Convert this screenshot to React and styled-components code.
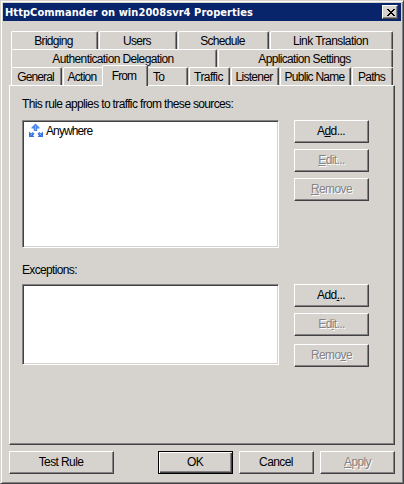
import React from "react";
import styled, { createGlobalStyle } from "styled-components";

const FACE = "#d6d3ce";
const SHADOW = "#848284";
const DARK = "#424142";

const GlobalStyle = createGlobalStyle`
  * { box-sizing: border-box; }
  body { margin: 0; background: ${FACE}; }
`;

const Dialog = styled.div`
  width: 404px;
  height: 484px;
  padding: 1px;
  display: flex;
  flex-direction: column;
  background: ${FACE};
  border: 1px solid;
  border-color: ${FACE} ${DARK} ${DARK} ${FACE};
  box-shadow: inset 1px 1px #fff, inset -1px -1px ${SHADOW};
  font: 12px/14px "Liberation Sans", Arial, sans-serif;
  letter-spacing: -0.6px;
  color: #000;
  white-space: nowrap;
  overflow: hidden;
`;

const TitleBar = styled.header`
  flex: none;
  height: 18px;
  margin: 1px 0 0 1px;
  width: 398px;
  padding: 0 3px 0 2px;
  display: flex;
  align-items: center;
  justify-content: space-between;
  background: #08246b;
`;

const Title = styled.h1`
  margin: 0;
  padding-top: 1px;
  font: bold 11px/16px "DejaVu Sans Condensed", "DejaVu Sans", sans-serif;
  font-stretch: condensed;
  letter-spacing: 0.06px;
  color: #fff;
`;

const CloseButton = styled.button`
  width: 16px;
  height: 14px;
  padding: 0 0 0 1px;
  display: flex;
  align-items: center;
  justify-content: center;
  background: ${FACE};
  border: 1px solid;
  border-color: #fff ${DARK} ${DARK} #fff;
  box-shadow: inset -1px -1px ${SHADOW};
`;

const Tabs = styled.nav`
  flex: none;
  width: 382px;
  margin: 10px 0 0 9px;
`;

const TabRow = styled.div`
  height: 18px;
  display: flex;
`;

const Tab = styled.div`
  flex: none;
  width: ${(p) => p.$width - p.$gap}px;
  height: 18px;
  margin-left: ${(p) => p.$gap}px;
  padding: 2px 2px 0 0;
  text-align: center;
  background: ${FACE};
  border-top: 1px solid #fff;
  border-left: 1px solid #fff;
  border-right: 1px solid ${DARK};
  border-radius: 2px 2px 0 0;
  box-shadow: inset -1px 0 ${SHADOW};
`;

const TabBeforeActive = styled(Tab)`
  border-right-color: transparent;
  box-shadow: none;
`;

const ActiveTab = styled(Tab)`
  position: relative;
  z-index: 1;
  height: 21px;
  margin-top: -2px;
  padding-top: 3px;
`;

const TabAfterActive = styled(Tab)`
  padding-left: 5px;
  text-align: left;
  border-left: 0;
`;

const tabKinds = { before: TabBeforeActive, active: ActiveTab, after: TabAfterActive };

const TabText = styled.span`
  letter-spacing: ${(p) => p.$spacing ?? -0.7}px;
`;

const Panel = styled.main`
  flex: none;
  width: 386px;
  height: 360px;
  margin-left: 7px;
  padding: 11px 0 0 12px;
  background: ${FACE};
  border: 1px solid;
  border-color: #fff ${DARK} ${DARK} #fff;
  box-shadow: inset -1px -1px ${SHADOW};
`;

const Caption = styled.div`
  height: 14px;
  margin-top: ${(p) => p.$top || 0}px;
  letter-spacing: ${(p) => p.$spacing}px;
`;

const Group = styled.section`
  display: flex;
  gap: 15px;
  margin-top: ${(p) => p.$top}px;
`;

const List = styled.div`
  width: 257px;
  height: ${(p) => p.$height}px;
  padding: 1px 0 0 5px;
  background: #fff;
  border: 1px solid;
  border-color: ${SHADOW} #fff #fff ${SHADOW};
  box-shadow: inset 1px 1px ${DARK}, inset -1px -1px ${FACE};
`;

const ListItem = styled.div`
  display: flex;
  align-items: center;
  gap: 2px;
  height: 18px;
  letter-spacing: -0.9px;
`;

const ButtonStack = styled.div`
  display: flex;
  flex-direction: column;
  gap: 6px;
`;

const Button = styled.button`
  flex: none;
  width: ${(p) => p.$width || 75}px;
  height: 23px;
  margin: ${(p) => p.$top || 0}px 0 0;
  padding: 0 1px 1px 0;
  font: inherit;
  letter-spacing: -0.6px;
  color: #000;
  background: ${FACE};
  border: 1px solid;
  border-color: #fff ${DARK} ${DARK} #fff;
  box-shadow: inset -1px -1px ${SHADOW};
  &:disabled {
    padding-left: 1px;
    color: ${SHADOW};
    text-shadow: 1px 1px #fff;
  }
  u {
    text-decoration-thickness: 1px;
    text-underline-offset: 1px;
    text-decoration-skip-ink: none;
  }
`;

const DefaultButton = styled(Button)`
  border-color: #000;
  box-shadow: inset 1px 1px #fff, inset -1px -1px ${DARK}, inset -2px -2px ${SHADOW};
`;

const Footer = styled.footer`
  display: flex;
  gap: 6px;
  margin: 6px 0 0 7px;
`;

const Spacer = styled.div`
  width: 32px;
`;

const CloseIcon = () => (
  <svg width="8" height="7" viewBox="0 0 8 7" shapeRendering="crispEdges" fill="#000">
    <path d="M0 0h2v1h1v1h2v-1h1v-1h2v1h-1v1h-1v1h-1v1h1v1h1v1h1v1h-2v-1h-1v-1h-2v1h-1v1h-2v-1h1v-1h1v-1h1v-1h-1v-1h-1v-1h-1z" />
  </svg>
);

const AnywhereIcon = () => (
  <svg width="16" height="16" viewBox="0 0 16 16">
    <path d="M7.500 .5 11.500 4.500V5.500H9.200v2.500H5.800V5.500H3.500V4.500z" fill="#4b86ee" />
    <path d="M1 8.500v5.500h5.500l-1.500-1.500L6.500 10.800 4.700 9 3 10.500z" fill="#346fdf" />
    <path d="M15 8.500v5.500h-5.500l1.500-1.500L9.500 10.800 11.300 9 13 10.500z" fill="#346fdf" />
    <path d="M7.500 2.500v4.500M2.500 12.500l2-2M13.500 12.500l-2-2" stroke="#86b4fc" fill="none" />
  </svg>
);

const tabRows = [
  [
    { label: "Bridging", width: 87 },
    { label: "Users", width: 79 },
    { label: "Schedule", width: 92 },
    { label: "Link Translation", width: 124, spacing: -0.55 },
  ],
  [
    { label: "Authentication Delegation", width: 206, spacing: -0.62 },
    { label: "Application Settings", width: 176, spacing: -0.65 },
  ],
  [
    { label: "General", width: 51, spacing: -0.9 },
    { label: "Action", width: 41, spacing: -0.75, kind: "before" },
    { label: "From", width: 45, spacing: -0.9, kind: "active", gap: -1 },
    { label: "To", width: 40, kind: "after", gap: 0 },
    { label: "Traffic", width: 42, spacing: -0.55 },
    { label: "Listener", width: 49, spacing: -0.7 },
    { label: "Public Name", width: 72, spacing: -0.75 },
    { label: "Paths", width: 42 },
  ],
];

export default function App() {
  return (
    <>
      <GlobalStyle />
      <Dialog>
        <TitleBar>
          <Title>HttpCommander on win2008svr4 Properties</Title>
          <CloseButton aria-label="Close"><CloseIcon /></CloseButton>
        </TitleBar>
        <Tabs>
          {tabRows.map((row, i) => (
            <TabRow key={i}>
              {row.map((t, j) => {
                const Kind = tabKinds[t.kind] || Tab;
                return (
                  <Kind key={t.label} $width={t.width} $gap={t.gap ?? (j ? 1 : 0)}>
                    <TabText $spacing={t.spacing}>{t.label}</TabText>
                  </Kind>
                );
              })}
            </TabRow>
          ))}
        </Tabs>
        <Panel>
          <Caption $spacing={-0.64}>This rule applies to traffic from these sources:</Caption>
          <Group $top={9}>
            <List $height={128}>
              <ListItem><AnywhereIcon />Anywhere</ListItem>
            </List>
            <ButtonStack>
              <Button>A<u>d</u>d...</Button>
              <Button disabled><u>E</u>dit...</Button>
              <Button disabled><u>R</u>emove</Button>
            </ButtonStack>
          </Group>
          <Caption $top={15} $spacing={-0.65}>Exceptions:</Caption>
          <Group $top={7}>
            <List $height={81} />
            <ButtonStack>
              <Button>Add<u>.</u>..</Button>
              <Button disabled>Ed<u>i</u>t...</Button>
              <Button $top={2} disabled>Remo<u>v</u>e</Button>
            </ButtonStack>
          </Group>
        </Panel>
        <Footer>
          <Button $width={105}>Test Rule</Button>
          <Spacer />
          <DefaultButton>OK</DefaultButton>
          <Button>Cancel</Button>
          <Button disabled><u>A</u>pply</Button>
        </Footer>
      </Dialog>
    </>
  );
}
